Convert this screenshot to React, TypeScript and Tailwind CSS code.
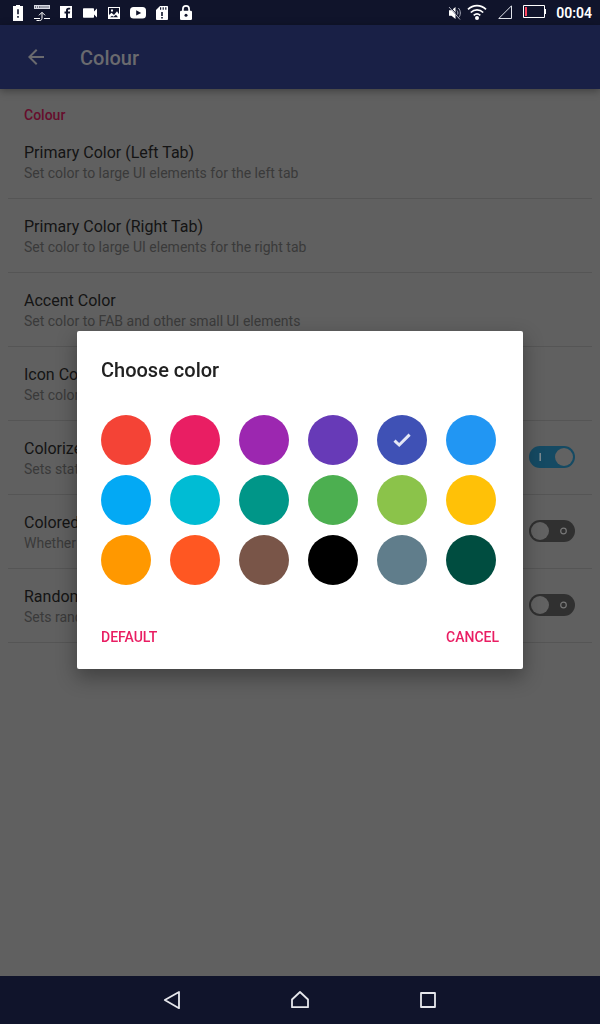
import { useState, type ReactNode } from "react";

const swatches = [
  { name: "Red", color: "bg-[#f44336]" },
  { name: "Pink", color: "bg-[#e91e63]" },
  { name: "Purple", color: "bg-[#9c27b0]" },
  { name: "Deep purple", color: "bg-[#673ab7]" },
  { name: "Indigo", color: "bg-[#3f51b5]" },
  { name: "Blue", color: "bg-[#2196f3]" },
  { name: "Light blue", color: "bg-[#03a9f4]" },
  { name: "Cyan", color: "bg-[#00bcd4]" },
  { name: "Teal", color: "bg-[#009688]" },
  { name: "Green", color: "bg-[#4caf50]" },
  { name: "Light green", color: "bg-[#8bc34a]" },
  { name: "Amber", color: "bg-[#ffc107]" },
  { name: "Orange", color: "bg-[#ff9800]" },
  { name: "Deep orange", color: "bg-[#ff5722]" },
  { name: "Brown", color: "bg-[#795548]" },
  { name: "Black", color: "bg-black" },
  { name: "Blue grey", color: "bg-[#607d8b]" },
  { name: "Dark teal", color: "bg-[#004d40]" },
];

type Setting = { title: string; summary: string; toggle?: boolean };

const settings: Setting[] = [
  { title: "Primary Color (Left Tab)", summary: "Set color to large UI elements for the left tab" },
  { title: "Primary Color (Right Tab)", summary: "Set color to large UI elements for the right tab" },
  { title: "Accent Color", summary: "Set color to FAB and other small UI elements" },
  { title: "Icon Color", summary: "Set color to icons" },
  { title: "Colorize status bar", summary: "Sets status bar color", toggle: true },
  { title: "Colored navigation bar", summary: "Whether to color the navigation bar", toggle: false },
  { title: "Random", summary: "Sets random colors", toggle: false },
];

function StatusIcon({ children }: { children: ReactNode }) {
  return (
    <svg viewBox="0 0 18 18" className="size-[18px] shrink-0" aria-hidden="true">
      {children}
    </svg>
  );
}

function StatusBar() {
  return (
    <header className="flex h-[25px] shrink-0 items-center justify-between bg-[#10142b] pt-px pr-2 pl-[9px] text-white">
      <div className="flex items-center gap-[6px]">
        <StatusIcon>
          <path fill="white" d="M7 1h4v1h3v15H4V2h3z" />
          <path fill="#10142b" d="M8.200 5.300h1.600v5H8.200zM8.200 12h1.600v1.800H8.200z" />
        </StatusIcon>
        <StatusIcon>
          <path fill="#d8dae4" d="M1 1h16v4H1z" />
          <path stroke="#10142b" strokeWidth="1" strokeDasharray="1 1" d="M2 3h5" />
          <path stroke="#10142b" strokeWidth=".6" d="M7 3h9" />
          <path fill="none" stroke="white" strokeWidth="1" d="M1 14.500h6M11 14.500h6M3.500 16.500h3C9 16.500 9 15 9 13V8.500M6 11.300l3-3 3 3" />
        </StatusIcon>
        <StatusIcon>
          <path fill="white" d="M3 2h12v12H3z" />
          <path fill="#10142b" d="M9 14V9.500H7.500V7.600H9V6.300C9 4.600 10 3.700 11.600 3.700h1.600v1.900H12c-.7 0-1 .3-1 .9v1.100h2.200l-.3 1.900H11V14z" />
        </StatusIcon>
        <StatusIcon>
          <path fill="white" d="M3 4.200h9c.7 0 1 .3 1 1v2.200l3-2.800v8.800l-3-2.800v2.200c0 .7-.3 1-1 1H3c-.7 0-1-.3-1-1V5.200c0-.7.300-1 1-1z" />
        </StatusIcon>
        <StatusIcon>
          <path fill="white" d="M3 3h12v12H3z" />
          <path fill="#10142b" d="M4 4h10v9.500H4z" />
          <path fill="white" d="M6 5.500h2v2H6zM4 11l2.500-2.200L9 11l3-3.700 2 3v4H4z" />
          <path fill="#10142b" d="M5 13.300l2-1.600 1.500 1 2.500-2 2 2.600z" />
        </StatusIcon>
        <StatusIcon>
          <rect x="1" y="3" width="16" height="11.600" rx="3.500" fill="white" />
          <path fill="#10142b" d="M7.200 6.200l5 2.700-5 2.700z" />
        </StatusIcon>
        <StatusIcon>
          <path fill="white" d="M7 2h7c.7 0 1 .3 1 1v12.300c0 .5-.3.700-1 .700H4c-.7 0-1-.2-1-.7V6z" />
          <path fill="#10142b" d="M7 3.200h1.200v2.600H7zM9.600 3.200h1.200v2.600H9.600zM12.200 3.200h1.200v2.600h-1.200zM8.200 8h1.600v4H8.200zM8.200 13h1.600v1.600H8.200z" />
        </StatusIcon>
        <StatusIcon>
          <rect x="3" y="6.700" width="12" height="9.300" rx="1.300" fill="white" />
          <path fill="none" stroke="white" strokeWidth="1.700" d="M5.900 7.500V4.900a3.100 3.100 0 0 1 6.200 0v2.600" />
          <circle cx="9" cy="11.300" r="1.500" fill="#10142b" />
        </StatusIcon>
      </div>
      <div className="flex items-center">
        <svg viewBox="0 0 14 16" className="mr-[5px] h-4 w-[14px]" aria-hidden="true">
          <path fill="#ffffff" d="M1 5.200h2.500L7.500 2v12L3.500 10.800H1z" />
          <path fill="none" stroke="#a9acba" d="M9 5.500c1.200 1.500 1.200 3.500 0 5M10.300 3c2.700 2.500 2.700 7.500 0 10" />
          <path stroke="#10142b" strokeWidth="1" d="M2 1.600l10.500 12" />
          <path stroke="#a9acba" strokeWidth="1" d="M1 2l11 12.500" />
        </svg>
        <svg viewBox="0 0 20 17" className="mr-[11px] mb-px h-[17px] w-5" aria-hidden="true">
          <path fill="none" stroke="white" strokeWidth="1.700" d="M1 5.400c5-5 13-5 18 0M3.800 8.500c3.600-3.500 8.800-3.500 12.400 0M6.700 11.400c2-1.800 4.600-1.800 6.600 0" />
          <circle cx="10" cy="14" r="2" fill="white" />
        </svg>
        <svg viewBox="0 0 14 14" className="mr-[11px] mb-[2px] size-[14px]" aria-hidden="true">
          <path fill="none" stroke="#e1e3ea" d="M13.500.8v12.700H.8z" />
        </svg>
        <svg viewBox="0 0 23 14" className="mr-[10px] mb-[2px] h-[14px] w-[23px]" aria-hidden="true">
          <path fill="none" stroke="white" d="M.5.500h21v12H.5z" />
          <path fill="white" d="M22 4h1v5h-1z" />
          <path fill="#ff4560" d="M2 2h2v9H2z" />
        </svg>
        <time className="text-sm font-semibold">00:04</time>
      </div>
    </header>
  );
}

function Toggle({ label, initial }: { label: string; initial: boolean }) {
  const [on, setOn] = useState(initial);
  return (
    <label className="relative mr-px mb-px block h-[22px] w-[46px] shrink-0">
      <input
        type="checkbox"
        role="switch"
        aria-label={label}
        checked={on}
        onChange={() => setOn(!on)}
        className="block h-full w-full appearance-none rounded-full bg-[#303030] checked:bg-[#154a63]"
      />
      <svg viewBox="0 0 46 22" className="pointer-events-none absolute inset-0" aria-hidden="true">
        {on ? (
          <>
            <path stroke="#808c92" strokeWidth="1.500" d="M11.200 7v8" />
            <circle cx="35" cy="11" r="9" fill="#626262" />
          </>
        ) : (
          <>
            <circle cx="11" cy="11" r="9" fill="#626262" />
            <circle cx="34.500" cy="11" r="2.800" fill="none" stroke="#777777" strokeWidth="1.200" />
          </>
        )}
      </svg>
    </label>
  );
}

function ColorDialog() {
  const [selected, setSelected] = useState("Indigo");
  return (
    <div className="fixed inset-0 flex items-center justify-center pt-6 pb-12">
      <section
        role="dialog"
        aria-modal="true"
        aria-labelledby="dialog-title"
        className="w-[446px] max-w-full rounded-xs bg-white px-6 pt-[25px] pb-[14px] shadow-[0_8px_20px_1px_rgba(0,0,0,0.32)]"
      >
        <h2 id="dialog-title" className="text-xl leading-7 font-medium text-[#212121]">
          Choose color
        </h2>
        <div className="mt-[31px] flex flex-wrap gap-x-[19px] gap-y-[10px]">
          {swatches.map(({ name, color }) => (
            <button
              key={name}
              type="button"
              aria-label={name}
              aria-pressed={selected === name}
              onClick={() => setSelected(name)}
              className={`flex size-[50px] items-center justify-center rounded-full ${color}`}
            >
              {selected === name && (
                <svg viewBox="0 0 24 24" className="size-6" aria-hidden="true">
                  <path fill="none" stroke="#e4e7f5" strokeWidth="3" d="M4.500 12.600l4.700 4.400L19.600 6.600" />
                </svg>
              )}
            </button>
          ))}
        </div>
        <div className="mt-[34px] flex justify-between text-sm font-medium text-[#e91e63]">
          <button type="button" className="h-9">DEFAULT</button>
          <button type="button" className="h-9">CANCEL</button>
        </div>
      </section>
    </div>
  );
}

export default function App() {
  return (
    <div className="flex min-h-screen flex-col bg-[#606060] font-[Roboto,sans-serif]">
      <StatusBar />
      <div className="flex h-16 shrink-0 items-center bg-[#192046] px-6 text-[#6a6a6e] shadow-[0_2px_8px_rgba(0,0,0,0.35)]">
        <button type="button" aria-label="Back" className="mr-8">
          <svg viewBox="0 0 24 24" className="size-6" fill="currentColor" aria-hidden="true">
            <path d="M20 11H7.830l5.590-5.590L12 4l-8 8 8 8 1.410-1.410L7.830 13H20z" />
          </svg>
        </button>
        <h1 className="pt-[2px] text-xl font-medium">Colour</h1>
      </div>

      <main className="grow px-2 pt-4">
        <h2 className="px-4 text-sm leading-5 font-medium text-[#660d2c]">Colour</h2>
        <ul>
          {settings.map(({ title, summary, toggle }) => (
            <li key={title} className="flex h-[74px] items-center justify-between border-b border-[#555555] px-4">
              <div className="pt-[3px]">
                <h3 className="text-base leading-5 text-[#141414]">{title}</h3>
                <p className="text-sm leading-5 text-[#3a3a3a]">{summary}</p>
              </div>
              {toggle !== undefined && <Toggle label={title} initial={toggle} />}
            </li>
          ))}
        </ul>
      </main>

      <nav className="flex h-12 shrink-0 items-center justify-center gap-[104px] bg-[#10142b] text-[#e6e7ec]">
        <button type="button" aria-label="Back">
          <svg viewBox="0 0 24 24" className="size-6" fill="none" stroke="currentColor" strokeWidth="1.800" strokeLinejoin="round" aria-hidden="true">
            <path d="M4.800 12L19 4v16.200z" />
          </svg>
        </button>
        <button type="button" aria-label="Home">
          <svg viewBox="0 0 24 24" className="size-6" fill="none" stroke="currentColor" strokeWidth="1.800" strokeLinejoin="round" aria-hidden="true">
            <path d="M4 11.500L12 4l8 7.500v7.700H4z" />
          </svg>
        </button>
        <button type="button" aria-label="Recent apps">
          <svg viewBox="0 0 24 24" className="size-6" fill="none" stroke="currentColor" strokeWidth="1.800" strokeLinejoin="round" aria-hidden="true">
            <path d="M5 5h14v14H5z" />
          </svg>
        </button>
      </nav>

      <ColorDialog />
    </div>
  );
}
